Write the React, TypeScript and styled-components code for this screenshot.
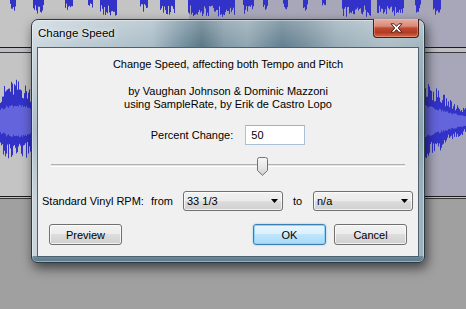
import React from "react";
import styled, { createGlobalStyle, css } from "styled-components";

const UI_FONT = `"Liberation Sans", Arial, sans-serif`;
const WAVE = "#3232c8";
const RMS = "#6464dc";
const SELECT_FROM = 189;

const PERCENT = 50;
const SLIDER_WARP = 1.30105;
const SLIDER_WIDTH = 353;
const THUMB_WIDTH = 11;

// audacity warps the positive half of the slider so that +400 % sits at the end
const sliderPos = (pct: number) => {
  const unwarped = pct > 0 ? Math.pow(pct, 1 / SLIDER_WARP) : pct;
  return (unwarped + 100) / 200;
};

const noise = (i: number, seed: number) => {
  const v = Math.sin(i * 12.9898 + seed * 78.233) * 43758.5453;
  return v - Math.floor(v);
};

// spikes of the track above, hanging into view from the top
const TOP_CLUSTERS: [number, number, number][] = [
  [10, 15, 12], [33, 43, 14], [65, 72, 10], [88, 92, 8], [100, 116, 16],
  [140, 147, 12], [160, 174, 15], [188, 234, 17], [243, 253, 14],
  [263, 267, 12], [283, 287, 10], [303, 307, 12], [322, 325, 9],
  [342, 370, 17], [377, 403, 16], [415, 420, 13], [433, 440, 15],
];

const topSpikes = () => {
  let d = "";
  TOP_CLUSTERS.forEach(([a, b, len]) => {
    for (let x = a; x <= b; x++) {
      const r = noise(x, 1);
      d += `M${x + 0.5} 0V${(len * (0.3 + 0.7 * r)).toFixed(1)}`;
    }
  });
  return d;
};

const ENVELOPE: [number, number][] = [
  [0, 32], [8, 40], [16, 42], [24, 38], [31, 34], [200, 34],
  [425, 40], [432, 36], [442, 28], [452, 20], [466, 13],
];

const envelope = (x: number) => {
  for (let i = 1; i < ENVELOPE.length; i++) {
    const [x1, y1] = ENVELOPE[i];
    const [x0, y0] = ENVELOPE[i - 1];
    if (x <= x1) return y0 + ((x - x0) / (x1 - x0)) * (y1 - y0);
  }
  return 13;
};

const mainWave = (center: number) => {
  let peaks = "";
  let rms = "";
  for (let x = 0; x < 466; x++) {
    const env = envelope(x);
    const top = center - env * (0.55 + 0.45 * noise(x, 2));
    const bottom = center + env * (0.55 + 0.45 * noise(x, 3));
    const r = env * (0.33 + 0.08 * noise(x, 4));
    peaks += `M${x + 0.5} ${top.toFixed(1)}V${bottom.toFixed(1)}`;
    rms += `M${x + 0.5} ${(center - r).toFixed(1)}V${(center + r).toFixed(1)}`;
  }
  return { peaks, rms };
};

const GlobalStyle = createGlobalStyle`
  html, body {
    margin: 0;
    padding: 0;
    background: #a0a0a0;
  }
  body {
    font-family: ${UI_FONT};
    font-size: 11px;
    color: #000;
  }
`;

const Screen = styled.div`
  position: relative;
  width: 466px;
  height: 309px;
  overflow: hidden;
  display: flex;
  flex-direction: column;
  background: #a0a0a0;
`;

const Track = styled.div<{ $height: number }>`
  height: ${(p) => p.$height}px;
  background: linear-gradient(
    90deg,
    #c4c4c4 0 ${SELECT_FROM}px,
    #a7a7b9 ${SELECT_FROM}px
  );

  svg {
    display: block;
  }
`;

const Divider = styled.div<{ $gap: number }>`
  height: ${(p) => p.$gap}px;
  border-top: 1px solid #1c1c1c;
  border-bottom: 1px solid #3a3a3a;
  background: #bdbdc2;
`;

const Dialog = styled.div`
  position: absolute;
  left: 31px;
  top: 19px;
  width: 394px;
  height: 244px;
  box-sizing: border-box;
  display: flex;
  flex-direction: column;
  padding: 0 5px 5px;
  border: 1px solid #2b3943;
  border-radius: 7px 7px 6px 6px;
  background:
    linear-gradient(180deg, #6f8c9c, #58778a) bottom / 100% 6px no-repeat,
    linear-gradient(
      180deg,
      rgba(255, 255, 255, 0.28) 0,
      rgba(255, 255, 255, 0.05) 27px,
      rgba(90, 120, 145, 0.25) 45%,
      rgba(255, 255, 255, 0) 75%
    ),
    linear-gradient(
      90deg,
      #c9d6dd 0,
      #bccbd4 40px,
      #a6b9c4 120px,
      #6c899a 152px,
      #52707f 170px,
      #7a93a1 192px,
      #8aa1ad 215px,
      #5a798a 250px,
      #6e8897 272px,
      #94a9b5 305px,
      #a9bbc5 355px,
      #9db0bb 394px
    );
  box-shadow:
    inset 0 0 0 1px rgba(255, 255, 255, 0.4),
    2px 5px 12px rgba(0, 0, 0, 0.6);
`;

const TitleBar = styled.div`
  height: 27px;
  display: flex;
  align-items: flex-start;
  justify-content: space-between;
`;

const TitleText = styled.span`
  margin: 6px 0 0 1px;
  font-size: 11.5px;
  line-height: 15px;
  text-shadow: 0 0 6px rgba(255, 255, 255, 0.9), 0 0 2px rgba(255, 255, 255, 0.8);
`;

const CloseButton = styled.div`
  margin-top: -1px;
  width: 46px;
  height: 19px;
  box-sizing: border-box;
  display: flex;
  align-items: center;
  justify-content: center;
  border: 1px solid #4a1f17;
  border-top: none;
  border-radius: 0 0 4px 4px;
  background: linear-gradient(
    180deg,
    #e8ad9f 0,
    #d98a78 40%,
    #c04a33 50%,
    #b43a22 75%,
    #d06c50 100%
  );
  box-shadow: inset 0 0 0 1px rgba(255, 200, 180, 0.35);
`;

const Client = styled.div`
  flex: 1;
  display: flex;
  flex-direction: column;
  padding-top: 10px;
  background: #f0f0f0;
  border: 1px solid #4d606e;
`;

const Heading = styled.p`
  margin: 0 0 14px;
  text-align: center;
  line-height: 13px;
`;

const Credits = styled.p`
  margin: 0 0 14px;
  text-align: center;
  line-height: 13px;
`;

const FieldRow = styled.div`
  height: 20px;
  display: flex;
  align-items: center;
  justify-content: center;
  gap: 12px;
  margin-bottom: 11px;
`;

const TextInput = styled.input`
  width: 60px;
  height: 20px;
  box-sizing: border-box;
  padding: 0 5px;
  border: 1px solid #abc0d8;
  border-top-color: #9cb2cc;
  background: #fff;
  font-family: ${UI_FONT};
  font-size: 11px;
  color: #000;
  outline: none;
`;

const SliderBox = styled.div`
  position: relative;
  height: 20px;
  margin: 0 13px 15px;
`;

const SliderTrack = styled.div`
  margin-top: 8px;
  height: 1px;
  border-top: 1px solid #b2b2b2;
  border-bottom: 1px solid #ffffff;
  background: #e2e2e2;
`;

const SliderThumb = styled.svg`
  position: absolute;
  top: 1px;
  display: block;
`;

const RpmRow = styled.div`
  height: 20px;
  display: grid;
  grid-template-columns: 109px 32px 100px 30px 100px;
  align-items: center;
  padding-left: 4px;
  margin-bottom: 13px;
  white-space: nowrap;
`;

const ToLabel = styled.span`
  padding-left: 10px;
`;

const buttonFace = css`
  border: 1px solid #707070;
  border-radius: 3px;
  background: linear-gradient(
    180deg,
    #f2f2f2 0,
    #ebebeb 50%,
    #dddddd 50%,
    #cfcfcf 100%
  );
  box-shadow: inset 0 0 0 1px rgba(255, 255, 255, 0.7);
`;

const ComboBox = styled.div`
  ${buttonFace};
  height: 20px;
  box-sizing: border-box;
  display: flex;
  align-items: center;
  justify-content: space-between;
  padding: 0 4px 0 3px;
`;

const ButtonRow = styled.div`
  height: 21px;
  display: flex;
  gap: 8px;
  padding: 0 11px;
`;

const PushButton = styled.button<{ $primary?: boolean; $push?: boolean }>`
  ${buttonFace};
  width: 73px;
  height: 21px;
  padding: 0;
  margin-right: ${(p) => (p.$push ? "auto" : "0")};
  font-family: ${UI_FONT};
  font-size: 11px;
  color: #000;

  ${(p) =>
    p.$primary &&
    css`
      border-color: #3c7fb1;
      background: linear-gradient(
        180deg,
        #eaf6fd 0,
        #d9f0fc 50%,
        #bee6fd 50%,
        #a7d9f5 100%
      );
      box-shadow: inset 0 0 0 1px #8fd3fa, 0 0 2px rgba(60, 160, 230, 0.6);
    `}
`;

const Arrow = () => (
  <svg width="7" height="4" viewBox="0 0 7 4">
    <path d="M0 0H7L3.5 4Z" fill="#000" />
  </svg>
);

const Combo = ({ value }: { value: string }) => (
  <ComboBox>
    <span>{value}</span>
    <Arrow />
  </ComboBox>
);

const CloseGlyph = () => (
  <svg width="13" height="10" viewBox="0 0 13 10">
    <path
      d="M1 0.8H4.2L6.5 3.4L8.8 0.8H12L8.2 5L12 9.2H8.8L6.5 6.6L4.2 9.2H1L4.8 5Z"
      fill="#fff"
      stroke="#3b1a12"
      strokeWidth="0.9"
      strokeLinejoin="round"
    />
  </svg>
);

const Thumb = ({ left }: { left: number }) => (
  <SliderThumb width="11" height="19" viewBox="0 0 11 19" style={{ left }}>
    <defs>
      <linearGradient id="thumbFace" x1="0" y1="0" x2="0" y2="1">
        <stop offset="0" stopColor="#f7f7f7" />
        <stop offset="0.6" stopColor="#e4e4e4" />
        <stop offset="1" stopColor="#cfcfcf" />
      </linearGradient>
    </defs>
    <path
      d="M0.5 2.5Q0.5 0.5 2.5 0.5H8.5Q10.5 0.5 10.5 2.5V13.5L5.5 18.3L0.5 13.5Z"
      fill="url(#thumbFace)"
      stroke="#727272"
    />
  </SliderThumb>
);

const App = () => {
  const wave = mainWave(68);
  const thumbLeft = sliderPos(PERCENT) * (SLIDER_WIDTH - THUMB_WIDTH);

  return (
    <>
      <GlobalStyle />
      <Screen>
        <Track $height={47}>
          <svg width="466" height="47">
            <path d={topSpikes()} stroke={WAVE} strokeWidth="1" />
          </svg>
        </Track>
        <Divider $gap={4} />
        <Track $height={143}>
          <svg width="466" height="143">
            <path d={wave.peaks} stroke={WAVE} strokeWidth="1" />
            <path d={wave.rms} stroke={RMS} strokeWidth="1" />
          </svg>
        </Track>
        <Divider $gap={1} />

        <Dialog>
          <TitleBar>
            <TitleText>Change Speed</TitleText>
            <CloseButton>
              <CloseGlyph />
            </CloseButton>
          </TitleBar>
          <Client>
            <Heading>Change Speed, affecting both Tempo and Pitch</Heading>
            <Credits>
              by Vaughan Johnson &amp; Dominic Mazzoni
              <br />
              using SampleRate, by Erik de Castro Lopo
            </Credits>
            <FieldRow>
              <span>Percent Change:</span>
              <TextInput defaultValue={String(PERCENT)} />
            </FieldRow>
            <SliderBox>
              <SliderTrack />
              <Thumb left={thumbLeft} />
            </SliderBox>
            <RpmRow>
              <span>Standard Vinyl RPM:</span>
              <span>from</span>
              <Combo value="33 1/3" />
              <ToLabel>to</ToLabel>
              <Combo value="n/a" />
            </RpmRow>
            <ButtonRow>
              <PushButton $push>Preview</PushButton>
              <PushButton $primary>OK</PushButton>
              <PushButton>Cancel</PushButton>
            </ButtonRow>
          </Client>
        </Dialog>
      </Screen>
    </>
  );
};

export default App;
